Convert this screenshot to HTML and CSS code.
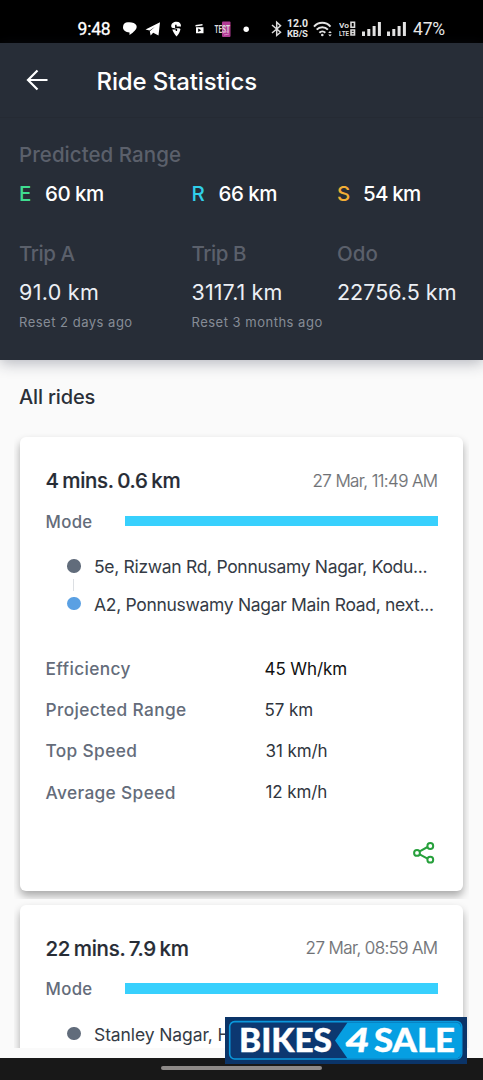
FILE: index.html
```html
<!DOCTYPE html>
<html lang="en">
<head>
<meta charset="utf-8">
<title>Ride Statistics</title>
<link rel="stylesheet" href="styles.css">
</head>
<body>
<div class="phone">
  <div class="status">
    <span class="clock">9:48</span>
    <svg class="notif" width="154" height="24" viewBox="0 0 154 24">
      <g fill="#fff">
        <path d="M6 5.600c4.200-1 9-.2 10.300 2.700 1.300 3-1 5-3.600 7.500l-3.200 2.200v-2.400C5.600 15.200 3 13.300 3 10.600 3 8 4 6.200 6 5.600z"/>
        <path d="M25.500 12.500 40 5.200 38.500 18.600l-5.300-2.800-2.600 2.700-.8-4.200 5.200-4.600-5.400 3.800z"/>
        <path d="M56.500 4.700c3 0 4.700 1.800 4.500 4.800h-4.400v-1.800h-1.500v3.300c3.200.3 5.500 0 5.300 1.400-.4 2.500-2 4.800-3.900 7.200-2-2.300-3.400-4.500-4.200-7h3.400v1.500h1.400v-2.300c-3-.3-5.900-.3-5.900-2.700 0-2.800 2.300-4.400 5.300-4.400z"/>
        <path d="M75.500 8 82.500 7v1.600l-7 1zM76 10.200h7.500v6H76z"/>
        <circle cx="126.200" cy="12.200" r="2.700"/>
      </g>
      <path d="M78.200 11.500v3.500l3-1.800z" fill="#000"/>
      <rect x="102" y="4.500" width="8.500" height="15.500" rx="1" fill="#b23a94"/>
      <text class="tiny" x="94.500" y="15.500" textLength="15.500" lengthAdjust="spacingAndGlyphs">TEST</text>
      <path d="M103 16l6-2M104 18l5-1" stroke="#de8ac6"/>
    </svg>
    <svg class="bt" width="12" height="18" viewBox="0 0 12 18" fill="none" stroke="#ddd" stroke-width="1.500"><path d="M1 5l8.500 7.300L5.700 15.500V2.300L9.500 5.700 1 13"/></svg>
    <span class="net"><b>12.0</b><b>KB/S</b></span>
    <svg class="wifi" width="20" height="18" viewBox="0 0 20 18" fill="none" stroke="#e4e4e4" stroke-width="2"><path d="M1 6.600C5.500 1.600 13 1.600 17.500 6.600M3.700 9.700c3-3.300 8.200-3.300 11.200 0M6.400 12.700c1.700-1.700 4.200-1.700 5.900 0"/><circle cx="9.300" cy="15" r="1.300" fill="#e4e4e4" stroke="none"/><path d="M15.200 13l1.800-2 1.800 2zM15.200 14.500l1.800 2 1.800-2z" fill="#e4e4e4" stroke="none"/></svg>
    <svg class="volte" width="17" height="16" viewBox="0 0 17 16">
      <g class="vtext"><text x="0" y="6.500" textLength="10" lengthAdjust="spacingAndGlyphs">Vo</text><text x="0" y="15" textLength="10" lengthAdjust="spacingAndGlyphs">LTE</text></g>
      <path d="M12 1.200h3.500v5H12zM12 9h3.500v5H12zM12 11.500h3.500" fill="none" stroke="#ddd" stroke-width="1.600"/>
    </svg>
    <svg class="sig" width="19" height="14" viewBox="0 0 19 14" fill="#e4e4e4"><path d="M0 9.500h3V14H0zM5.300 7h3v7h-3zM10.600 4h3v10h-3zM15.900 0h3v14h-3z"/></svg>
    <svg class="sig" width="19" height="14" viewBox="0 0 19 14" fill="#e4e4e4"><path d="M0 9.500h3V14H0zM5.300 7h3v7h-3zM10.600 4h3v10h-3zM15.900 0h3v14h-3z"/></svg>
    <span class="battery">47%</span>
  </div>

  <header class="top">
    <div class="appbar">
      <svg width="22" height="22" viewBox="0 0 22 22" fill="none" stroke="#fff" stroke-width="2.200"><path d="M21.500 11H2M11.500 1.500 2 11l9.500 9.500"/></svg>
      <h1>Ride Statistics</h1>
    </div>
    <div class="summary">
      <div class="label predicted">Predicted Range</div>
      <div class="cols modes">
        <div><i class="eco">E</i><span>60 km</span></div>
        <div><i class="ride">R</i><span>66 km</span></div>
        <div><i class="sport">S</i><span>54 km</span></div>
      </div>
      <div class="cols">
        <div><div class="label trip">Trip A</div><div class="dist a">91.0 km</div><div class="reset">Reset 2 days ago</div></div>
        <div><div class="label trip">Trip B</div><div class="dist b">3117.1 km</div><div class="reset">Reset 3 months ago</div></div>
        <div><div class="label odo">Odo</div><div class="dist c">22756.5 km</div></div>
      </div>
    </div>
  </header>

  <main class="rides">
    <h2>All rides</h2>
    <div class="tile">
      <article class="card">
        <div class="head"><h3>4 mins. 0.6 km</h3><time>27 Mar, 11:49 AM</time></div>
        <div class="mode"><span>Mode</span><div class="bar"></div></div>
        <ul class="route">
          <li><span class="dot"></span><span class="addr">5e, Rizwan Rd, Ponnusamy Nagar, Kodu...</span></li>
          <li class="to"><span class="dot"></span><span class="addr">A2, Ponnuswamy Nagar Main Road, next...</span></li>
        </ul>
        <dl class="stats">
          <dt>Efficiency</dt><dd class="strong">45 Wh/km</dd>
          <dt>Projected Range</dt><dd>57 km</dd>
          <dt>Top Speed</dt><dd class="speed">31 km/h</dd>
          <dt>Average Speed</dt><dd class="speed">12 km/h</dd>
        </dl>
        <svg class="share" width="22" height="22" viewBox="0 0 22 22" fill="none" stroke="#27a03c" stroke-width="2"><path d="M6.700 9.300 14.500 5M6.700 12.400l7.800 4.300"/><circle cx="4" cy="10.900" r="2.900"/><circle cx="17.300" cy="4" r="2.900"/><circle cx="17.300" cy="17.700" r="2.900"/></svg>
      </article>
    </div>
    <div class="tile second">
      <article class="card">
        <div class="head"><h3>22 mins. 7.9 km</h3><time>27 Mar, 08:59 AM</time></div>
        <div class="mode"><span>Mode</span><div class="bar"></div></div>
        <ul class="route">
          <li><span class="dot"></span><span class="addr short">Stanley Nagar, H</span></li>
        </ul>
      </article>
    </div>
  </main>

  <footer class="nav"><div class="pill"></div></footer>

  <svg class="badge" width="242" height="47" viewBox="0 0 242 47">
    <rect width="242" height="47" fill="#0b3468"/>
    <rect x="4.700" y="4.600" width="232" height="37.400" rx="5" fill="#0c3871" stroke="#0a98dc" stroke-width="1.600"/>
    <path d="M122.500 5.500H231a5 5 0 0 1 5 5v26a5 5 0 0 1-5 5H122.500L110 23.500z" fill="#069fe2"/>
    <text x="14" y="35.300" textLength="93" lengthAdjust="spacingAndGlyphs">BIKES</text>
    <text transform="translate(119.500 35.300) skewX(-8)" textLength="23" lengthAdjust="spacingAndGlyphs">4</text>
    <text x="149" y="35.300" textLength="81" lengthAdjust="spacingAndGlyphs">SALE</text>
  </svg>
</div>
</body>
</html>
```
FILE: styles.css
```css
* { box-sizing: border-box; margin: 0; padding: 0; }
body { background: #fafafa; font-family: Inter, "Liberation Sans", sans-serif; }
.phone { position: relative; width: 483px; height: 1080px; overflow: hidden; display: flex; flex-direction: column; white-space: nowrap; }

.status { height: 43px; flex: none; background: #000; color: #e8e8e8; display: flex; align-items: center; padding: 14px 0 0 77.500px; font-family: Roboto, sans-serif; }
.clock { width: 42.500px; font-size: 17.500px; line-height: 28px; color: #fff; letter-spacing: -0.200px; -webkit-text-stroke: .3px #fff; }
.notif { flex: none; }
.tiny { font: 700 10px Roboto, sans-serif; fill: #ddd; }
.bt { margin-left: -3px; }
.net { display: flex; flex-direction: column; width: 21px; margin-left: 4px; font-size: 9.500px; line-height: 10px; letter-spacing: -0.200px; }
.net b { font-weight: 700; }
.net b:first-child { font-size: 10.500px; letter-spacing: 0; }
.wifi { margin-left: 5px; }
.volte { margin-left: 6px; }
.vtext { font: 700 7px Roboto, sans-serif; fill: #ddd; }
.sig { margin-left: 6px; }
.battery { margin-left: 7px; font-size: 17.500px; line-height: 28px; letter-spacing: -0.200px; }

.top { flex: none; height: 317px; background: #272d37; color: #fff; box-shadow: 0 3px 14px rgba(30, 38, 60, .32); position: relative; }
.appbar { height: 75px; display: flex; align-items: center; padding: 4px 26px 0; gap: 48.500px; border-bottom: 1px solid #252a33; }
h1 { font-size: 24px; font-weight: 500; line-height: 30px; letter-spacing: -0.130px; }
.appbar svg { margin-top: -4px; }
.summary { padding: 22px 19px 0; }
.label { color: #5b606b; font-size: 20.500px; font-weight: 500; line-height: 30px; }
.predicted { letter-spacing: .05px; }
.trip { letter-spacing: -0.450px; }
.cols { display: grid; grid-template-columns: 172.500px 145.500px 1fr; }
.modes { padding: 9px 0 30px; }
.modes > div { display: flex; line-height: 30px; font-size: 20.500px; font-weight: 500; }
.modes i { font-style: normal; width: 26px; }
.modes span { letter-spacing: -0.500px; }
.modes .ride { width: 27px; }
.modes .sport + span { letter-spacing: -0.750px; }
.eco { color: #3fdd90; }
.ride { color: #30cfe9; }
.sport { color: #f2ae35; }
.dist { font-size: 21.500px; line-height: 30px; padding-top: 8px; color: #eceff4; }
.a { letter-spacing: .3px; }
.b { letter-spacing: .1px; }
.reset { font-size: 13px; line-height: 20px; padding-top: 5px; letter-spacing: .5px; color: #868c96; }

.rides { height: 688px; flex: none; overflow: hidden; padding-left: 14px; }
h2 { font-size: 20px; font-weight: 500; line-height: 30px; padding: 22px 0 0 5px; color: #2a2f38; letter-spacing: -0.150px; }
.tile { width: 455px; height: 467.500px; overflow: hidden; padding: 6px 6px 7px; margin-top: 19px; }
.second { margin-top: 0; height: 200px; }
.card { height: 454px; background: #fff; border-radius: 6px; box-shadow: 0 5px 8px rgba(0, 0, 0, .32); padding: 28px 25.500px 0; }
.head { display: flex; justify-content: space-between; align-items: center; height: 31px; }
h3 { font-size: 20.500px; font-weight: 500; color: #272c35; letter-spacing: -0.300px; word-spacing: -1.500px; -webkit-text-stroke: .2px #272c35; }
time { font-size: 17px; font-weight: 300; color: #6e7074; letter-spacing: -0.600px; -webkit-text-stroke: .2px #6e7074; }
.mode { display: flex; justify-content: space-between; align-items: center; height: 51px; color: #646c7a; font-size: 16.800px; font-weight: 500; letter-spacing: .35px; }
.bar { width: 313px; height: 10.500px; background: #38d0fd; margin-top: -1px; }
.route { list-style: none; padding: 1px 0 0 21.500px; }
.route li { height: 37.500px; display: flex; align-items: center; gap: 13.500px; font-size: 17.500px; color: #353b45; }
.addr { flex: none; letter-spacing: -0.310px; }
.short { letter-spacing: -0.100px; }
.dot { flex: none; width: 13.500px; height: 13.500px; border-radius: 50%; background: #616c7b; margin-top: -2px; position: relative; }
.to .dot { background: #5aa0e3; }
.to .dot::before { content: ""; position: absolute; left: 6px; top: -18px; width: 1px; height: 12px; background: #dcdfe3; }
.stats { display: grid; grid-template-columns: 219px 1fr; grid-auto-rows: 41.200px; align-items: center; padding-top: 25px; font-size: 17px; }
dt { color: #646c7a; font-weight: 500; font-size: 17.300px; letter-spacing: .36px; }
dd { color: #30353e; letter-spacing: -0.100px; }
.speed { padding-left: 1px; }
.strong { color: #111; }
.share { display: block; margin: 29px 2.500px 0 auto; }

.nav { height: 22px; margin-top: auto; background: #181818; display: flex; justify-content: center; align-items: center; }
.pill { width: 161px; height: 4.500px; border-radius: 2px; background: #8e8a88; margin-top: -2px; }
.badge { position: absolute; left: 225px; top: 1017px; font: 900 33px Lato, sans-serif; fill: #fff; }
.badge text { stroke: #fff; stroke-width: .4px; }
```
